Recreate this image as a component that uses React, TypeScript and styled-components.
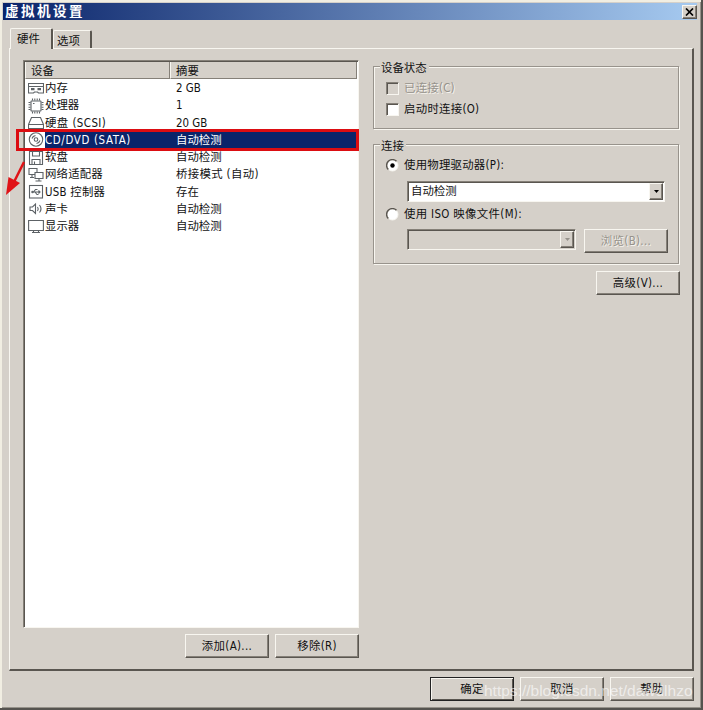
import React from "react";
import styled, { createGlobalStyle, css } from "styled-components";

const FACE = "#d5d0c9";
const SHADE = "#858078";
const DARK = "#5a5650";
const LIGHT = "#f8f6f0";

const GlobalStyle = createGlobalStyle`
  * { box-sizing: border-box; }
  body { margin: 0; background: ${FACE}; }
`;

const raised = css`
  border: 1px solid;
  border-color: ${LIGHT} ${DARK} ${DARK} ${LIGHT};
  box-shadow: inset -1px -1px 0 ${SHADE};
`;

const sunken = css`
  border: 1px solid;
  border-color: ${SHADE} ${LIGHT} ${LIGHT} ${SHADE};
  box-shadow: inset 1px 1px 0 ${DARK};
`;

const Window = styled.div`
  position: relative;
  width: 703px;
  height: 710px;
  padding: 3px 4px 3px 3px;
  display: flex;
  flex-direction: column;
  overflow: hidden;
  background: ${FACE};
  border: solid;
  border-width: 0 2px 2px 0;
  border-color: #55534f;
  box-shadow: inset 2px 2px 0 #f1eee2, inset -1px -1px 0 #96928a;
  font: 11.4px/17px "DejaVu Sans Condensed", "Noto Sans CJK SC", sans-serif;
  color: #111;
  white-space: nowrap;
`;

const TitleBar = styled.header`
  height: 17px;
  flex: none;
  display: flex;
  align-items: center;
  justify-content: space-between;
  padding-left: 2px;
  background: linear-gradient(90deg, #0a246a, #a6caf0);
`;

const Title = styled.h1`
  margin: 0;
  padding-bottom: 3px;
  color: #fff;
  font: bold 13.5px/14px "Noto Sans CJK SC", sans-serif;
  letter-spacing: 2.5px;
`;

const CloseButton = styled.button`
  ${raised}
  width: 15px;
  height: 14px;
  padding: 0;
  background: ${FACE};
  display: flex;
  align-items: center;
  justify-content: center;
`;

const Tabs = styled.nav`
  display: flex;
  align-items: flex-end;
  height: 28px;
  margin-left: 7px;
  flex: none;
`;

const Tab = styled.div<{ $active?: boolean }>`
  width: ${(p) => (p.$active ? 43 : 39)}px;
  height: ${(p) => (p.$active ? 21 : 18)}px;
  margin-bottom: ${(p) => (p.$active ? -1 : 0)}px;
  padding: ${(p) => (p.$active ? "2px 0 0 6px" : "2px 0 0 3px")};
  background: ${FACE};
  border: solid;
  border-width: 1px 2px 0 1px;
  border-color: ${LIGHT} ${DARK} ${LIGHT} ${LIGHT};
  border-radius: 2px 2px 0 0;
  line-height: 16px;
  position: relative;
  z-index: 1;
`;

const Page = styled.main`
  width: 685px;
  height: 623px;
  flex: none;
  margin-left: 6px;
  padding: 11px 12px 0 13px;
  display: flex;
  justify-content: space-between;
  border: solid;
  border-width: 1px 2px 2px 1px;
  border-color: ${LIGHT} ${DARK} ${DARK} ${LIGHT};
`;

const DevicePane = styled.section`
  width: 336px;
  display: flex;
  flex-direction: column;
`;

const DeviceList = styled.div`
  ${sunken}
  position: relative;
  height: 568px;
  padding: 1px;
  background: #fff;
`;

const ListHeader = styled.div`
  display: grid;
  grid-template-columns: 145px 1fr;
  height: 17px;
  margin-bottom: 1px;
`;

const HeaderCell = styled.div`
  height: 17px;
  background: ${FACE};
  border: solid;
  border-width: 0 1px 1px 1px;
  border-color: ${SHADE} ${SHADE} ${SHADE} ${LIGHT};
  padding: 1px 0 0 5px;
  line-height: 16px;
`;

const Row = styled.div<{ $selected?: boolean }>`
  display: grid;
  grid-template-columns: 20px 131px 1fr;
  height: 17.25px;
  align-items: center;
  ${(p) =>
    p.$selected &&
    css`
      color: #fff;
      background: linear-gradient(90deg, #fff 20px, transparent 20px),
        linear-gradient(180deg, #0a246a 15.5px, #fff 15.5px);
    `}
  svg { margin-left: 3px; }
`;

const Label = styled.span<{ $spacing?: number }>`
  letter-spacing: ${(p) => p.$spacing ?? 0}px;
`;

const Highlight = styled.div`
  position: absolute;
  left: -8px;
  top: 68px;
  width: 343px;
  height: 22px;
  border: 3px solid #dc0d12;
`;

const ArrowMark = styled.svg`
  position: absolute;
  left: 4px;
  top: 158px;
`;

const Button = styled.button<{ $primary?: boolean; $disabled?: boolean }>`
  ${raised}
  width: 84px;
  height: 24px;
  padding: 1px 0 0;
  flex: none;
  font: inherit;
  letter-spacing: 0.35px;
  color: #111;
  background: ${FACE};
  border-width: 1px;
  ${(p) =>
    p.$primary &&
    css`
      border-color: #222;
      box-shadow: inset 1px 1px 0 ${LIGHT}, inset -1px -1px 0 ${DARK};
    `}
  ${(p) =>
    p.$disabled &&
    css`
      color: #96928b;
      text-shadow: 1px 1px 0 #f5f3ed;
    `}
`;

const ListActions = styled.div`
  display: flex;
  justify-content: flex-end;
  gap: 6px;
  padding-top: 6px;
`;

const SettingsPane = styled.section`
  width: 308px;
  display: flex;
  flex-direction: column;
  align-items: flex-end;
  padding-top: 6px;
`;

const Group = styled.fieldset<{ $height: number; $gap: number }>`
  width: 306px;
  height: ${(p) => p.$height}px;
  margin: 0 1px ${(p) => p.$gap}px 0;
  padding: 0 0 0 12px;
  border: 1px solid #98938c;
  box-shadow: 1px 1px 0 ${LIGHT}, inset 1px 1px 0 ${LIGHT};
  display: flex;
  flex-direction: column;
`;

const GroupTitle = styled.div`
  align-self: flex-start;
  height: 12px;
  line-height: 12px;
  margin: -5px 0 0 -6px;
  padding: 0 2px 0 1px;
  background: ${FACE};
`;

const Option = styled.label<{ $top: number; $muted?: boolean }>`
  display: flex;
  align-items: center;
  gap: 5px;
  height: 17px;
  margin-top: ${(p) => p.$top}px;
  ${(p) => p.$muted && css`
    color: #96928b;
    text-shadow: 1px 1px 0 #f5f3ed;
  `}
`;

const CheckBox = styled.span<{ $muted?: boolean }>`
  ${sunken}
  width: 13px;
  height: 13px;
  background: ${(p) => (p.$muted ? FACE : "#fff")};
`;

const Combo = styled.div<{ $width: number; $muted?: boolean }>`
  ${sunken}
  width: ${(p) => p.$width}px;
  height: 21px;
  padding: 1px 1px 1px 3px;
  display: flex;
  justify-content: space-between;
  align-items: center;
  background: ${(p) => (p.$muted ? FACE : "#fff")};
`;

const ComboArrow = styled.span`
  ${raised}
  width: 14px;
  height: 17px;
  background: ${FACE};
  display: flex;
  align-items: center;
  justify-content: center;
`;

const FieldRow = styled.div<{ $top: number }>`
  display: flex;
  gap: 8px;
  margin: ${(p) => p.$top}px 0 0 21px;
`;

const Footer = styled.footer`
  display: flex;
  justify-content: flex-end;
  gap: 6px;
  padding: 6px 3px 0 0;
`;

const Watermark = styled.div`
  position: absolute;
  left: 484px;
  top: 681px;
  font: 15.5px/20px "Liberation Sans", sans-serif;
  color: rgba(255, 255, 255, 0.62);
`;

const Glyph = ({ children }: { children: React.ReactNode }) => (
  <svg width="16" height="16" viewBox="0 0 16 16" fill="none" stroke="#5d6266" strokeWidth="1.1">
    {children}
  </svg>
);

const icons: Record<string, React.ReactNode> = {
  memory: (
    <Glyph>
      <path d="M.5 2.500h15v9.500h-5l-1-1h-3l-1 1h-5zM.5 5.500h15" />
      <path d="M3 8.200h3.500M9.500 8.200h3.500" strokeWidth="2.200" />
    </Glyph>
  ),
  cpu: (
    <Glyph>
      <rect x="3" y="3" width="10" height="10" rx=".5" />
      <path d="M4.500 .5v2M6.800 .5v2M9.200 .5v2M11.500 .5v2M4.500 13.500v2M6.800 13.500v2M9.200 13.500v2M11.500 13.500v2M.5 4.500h2M.5 6.800h2M.5 9.200h2M.5 11.500h2M13.500 4.500h2M13.500 6.800h2M13.500 9.200h2M13.500 11.500h2" />
      <path d="M5 5.500h1.500" />
    </Glyph>
  ),
  disk: (
    <Glyph>
      <path d="M3.500 2.500h9l3 7v4h-15v-4zM.5 9.500h15" />
    </Glyph>
  ),
  cd: (
    <Glyph>
      <circle cx="8" cy="7.500" r="6.700" />
      <circle cx="8" cy="7.500" r="1.800" />
      <path d="M4 6.500Q4.800 4 7.500 3.500M8.500 11.500Q11.200 11 12 8.500" />
    </Glyph>
  ),
  floppy: (
    <Glyph>
      <path d="M1.500 1.500h13v13h-13zM4.500 1.500v4.500h7v-4.500M4 14.500v-5h8v5M6.500 11.500v3" />
    </Glyph>
  ),
  network: (
    <Glyph>
      <path d="M1 1.500h8v6h-8zM4 7.500v3M2 10.500h4" />
      <path d="M7 5.500h8v6h-8zM11 11.500v2.500M7.500 14h6" fill="#fff" />
    </Glyph>
  ),
  usb: (
    <Glyph>
      <rect x="1.500" y="1.500" width="13" height="12.500" />
      <path d="M4 8h8M5.500 8l2-2.500h2M7 8l2 2.500h1.500M10.500 6.500l1.500 1.500-1.500 1.500" />
      <circle cx="4.500" cy="8" r=".7" />
    </Glyph>
  ),
  sound: (
    <Glyph>
      <path d="M2 6h2.500l3-3v9.500l-3-3h-2.500zM9.500 6q1.500 2 0 4M11.500 4q3 4 0 7.500" />
    </Glyph>
  ),
  display: (
    <Glyph>
      <path d="M.6 1.500h14.800v10h-14.800zM5.500 11.500v2M10.500 11.500v2M4 13.500h8" />
    </Glyph>
  ),
};

const devices = [
  { icon: "memory", name: "内存", summary: "2 GB" },
  { icon: "cpu", name: "处理器", summary: "1" },
  { icon: "disk", name: "硬盘 (SCSI)", summary: "20 GB", spacing: 0.45 },
  { icon: "cd", name: "CD/DVD (SATA)", summary: "自动检测", spacing: 0.65, selected: true },
  { icon: "floppy", name: "软盘", summary: "自动检测" },
  { icon: "network", name: "网络适配器", summary: "桥接模式 (自动)", spacing: 0.2, summarySpacing: 0.35 },
  { icon: "usb", name: "USB 控制器", summary: "存在", spacing: 0.25 },
  { icon: "sound", name: "声卡", summary: "自动检测" },
  { icon: "display", name: "显示器", summary: "自动检测" },
];

const Radio = ({ checked = false }: { checked?: boolean }) => (
  <svg width="13" height="13" viewBox="0 0 13 13">
    <circle cx="6.500" cy="6.500" r="5.500" fill="#fff" stroke={LIGHT} />
    <path d="M2.300 10.500A5.500 5.500 0 0 1 10.500 2.300" fill="none" stroke={DARK} strokeWidth="1.500" />
    {checked && <circle cx="6.500" cy="6.500" r="2.200" fill="#000" />}
  </svg>
);

const DropArrow = ({ color = "#000" }: { color?: string }) => (
  <svg width="7" height="4" viewBox="0 0 7 4">
    <path d="M1 0h5L3.500 3z" fill={color} />
  </svg>
);

export default function App() {
  return (
    <>
      <GlobalStyle />
      <Window>
        <TitleBar>
          <Title>虚拟机设置</Title>
          <CloseButton aria-label="关闭">
            <svg width="9" height="8" viewBox="0 0 9 8">
              <path d="M1 .5l7 7M8 .5l-7 7" stroke="#000" strokeWidth="1.700" />
            </svg>
          </CloseButton>
        </TitleBar>
        <Tabs>
          <Tab $active>硬件</Tab>
          <Tab>选项</Tab>
        </Tabs>
        <Page>
          <DevicePane>
            <DeviceList>
              <ListHeader>
                <HeaderCell>设备</HeaderCell>
                <HeaderCell>摘要</HeaderCell>
              </ListHeader>
              {devices.map((d) => (
                <Row key={d.name} $selected={d.selected}>
                  {icons[d.icon]}
                  <Label $spacing={d.spacing}>{d.name}</Label>
                  <Label $spacing={d.summarySpacing}>{d.summary}</Label>
                </Row>
              ))}
              <Highlight />
            </DeviceList>
            <ListActions>
              <Button>添加(A)...</Button>
              <Button>移除(R)</Button>
            </ListActions>
          </DevicePane>
          <SettingsPane>
            <Group $height={63} $gap={15}>
              <GroupTitle>设备状态</GroupTitle>
              <Option $top={6} $muted>
                <CheckBox $muted />
                <Label $spacing={0.25}>已连接(C)</Label>
              </Option>
              <Option $top={4}>
                <CheckBox />
                <Label $spacing={0.3}>启动时连接(O)</Label>
              </Option>
            </Group>
            <Group $height={120} $gap={7}>
              <GroupTitle>连接</GroupTitle>
              <Option $top={5}>
                <Radio checked />
                <Label $spacing={0.25}>使用物理驱动器(P):</Label>
              </Option>
              <FieldRow $top={7}>
                <Combo $width={258}>
                  <Label>自动检测</Label>
                  <ComboArrow><DropArrow /></ComboArrow>
                </Combo>
              </FieldRow>
              <Option $top={4}>
                <Radio />
                <Label $spacing={0.35}>使用 ISO 映像文件(M):</Label>
              </Option>
              <FieldRow $top={6}>
                <Combo $width={169} $muted>
                  <span />
                  <ComboArrow><DropArrow color="#96928b" /></ComboArrow>
                </Combo>
                <Button $disabled>浏览(B)...</Button>
              </FieldRow>
            </Group>
            <Button>高级(V)...</Button>
          </SettingsPane>
        </Page>
        <Footer>
          <Button $primary>确定</Button>
          <Button>取消</Button>
          <Button>帮助</Button>
        </Footer>
        <ArrowMark width="22" height="40" viewBox="0 0 22 40">
          <path d="M20 4L10 24" stroke="#e01317" strokeWidth="2.500" />
          <path d="M2 37L4.500 19L16 25z" fill="#e01317" />
        </ArrowMark>
        <Watermark>https://blog.csdn.net/dawdlhzo</Watermark>
      </Window>
    </>
  );
}
